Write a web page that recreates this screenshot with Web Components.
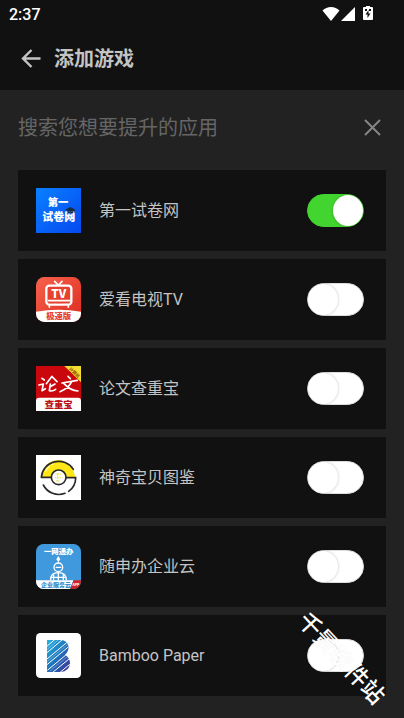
<!DOCTYPE html>
<html lang="zh-CN">
<head>
<meta charset="utf-8">
<meta name="viewport" content="width=device-width, initial-scale=1">
<title>添加游戏</title>
<style>
  body {
    margin: 0;
    background: #222;
    color: #c4c4c4;
    font-family: Roboto, "Noto Sans CJK SC", sans-serif;
    font-size: 16px;
  }
</style>
</head>
<body>
<game-picker></game-picker>

<template id="status-bar">
  <style>
    :host {
      display: flex;
      align-items: center;
      justify-content: space-between;
      height: 28px;
      padding: 0 31px 0 9px;
      background: #111;
      color: #fff;
      font-weight: 500;
    }
    .icons {
      display: flex;
      align-items: center;
      gap: 1px;
    }
    svg { display: block; fill: #fff; }
    .battery { margin-left: 7px; }
  </style>
  <span>2:37</span>
  <div class="icons">
    <svg width="18" height="16" viewBox="0 0 18 16"><path d="M.5 4.500Q4 1 9 1T17.500 4.500L9 15z"/></svg>
    <svg width="14" height="16" viewBox="0 0 14 16"><path d="M14 1v14H0z"/></svg>
    <svg class="battery" width="10" height="16" viewBox="0 0 10 16">
      <path d="M3 0h4v1h2q1 0 1 1v11q0 1-1 1H1q-1 0-1-1V2q0-1 1-1h2z"/>
      <path fill="#111" d="M2 3h2v2H2zM6 3h2v2H6zM5.500 4v3.500H7.500L4.500 12V8.500H2.500z"/>
    </svg>
  </div>
</template>

<template id="title-bar">
  <style>
    :host {
      display: flex;
      align-items: center;
      gap: 10px;
      height: 62px;
      padding: 0 18px;
      background: #111;
    }
    button {
      padding: 0;
      border: 0;
      background: none;
      color: inherit;
      cursor: pointer;
    }
    svg { display: block; }
    h1 {
      margin: 0;
      font-size: 20px;
      line-height: 28px;
      font-weight: 700;
    }
  </style>
  <button type="button" aria-label="返回">
    <svg width="26" height="26" viewBox="0 0 26 26" fill="none" stroke="currentColor" stroke-width="2.400"><path d="M22.500 12.500H6M13.500 4L5 12.500l8.500 8.500"/></svg>
  </button>
  <h1><slot></slot></h1>
</template>

<template id="search-box">
  <style>
    :host {
      display: flex;
      align-items: center;
      height: 76px;
      padding: 0 18px;
    }
    input {
      flex: 1;
      min-width: 0;
      padding: 0;
      border: 0;
      outline: 0;
      background: none;
      color: #c4c4c4;
      font: inherit;
      font-size: 20px;
    }
    input::placeholder { color: #666; opacity: 1; }
    button {
      padding: 4px;
      border: 0;
      background: none;
      color: #858585;
      cursor: pointer;
    }
    svg { display: block; }
  </style>
  <input type="text" aria-label="搜索">
  <button type="button" aria-label="清除">
    <svg width="18" height="18" viewBox="0 0 18 18" fill="none" stroke="currentColor" stroke-width="2"><path d="M1 1l15 15M16 1L1 16"/></svg>
  </button>
</template>

<template id="toggle-row">
  <style>
    :host {
      display: flex;
      align-items: center;
      gap: 18px;
      padding: 18px 22px 18px 18px;
      background: #111;
    }
    ::slotted(svg) {
      display: block;
      flex: none;
      width: 45px;
      height: 45px;
    }
    label {
      flex: 1;
      line-height: 24px;
    }
    input {
      appearance: none;
      position: relative;
      box-sizing: border-box;
      width: 57px;
      height: 33px;
      margin: 0;
      border: 1px solid #ddd;
      border-radius: 17px;
      background: #fff;
      cursor: pointer;
    }
    input::before {
      content: "";
      position: absolute;
      top: 0;
      left: 0;
      width: 30px;
      height: 31px;
      border-radius: 50%;
      background: #fff;
      box-shadow: 0 0 3px rgba(0, 0, 0, .25);
    }
    input:checked {
      border-color: #43d52f;
      background: #43d52f;
    }
    input:checked::before {
      left: auto;
      right: 0;
    }
  </style>
  <slot name="icon"></slot>
  <label for="switch"></label>
  <input id="switch" type="checkbox" role="switch">
</template>

<template id="game-picker">
  <style>
    :host {
      display: flex;
      flex-direction: column;
      box-sizing: border-box;
      position: relative;
      min-height: 100vh;
      border-bottom: 1px solid #151012;
    }
    main {
      display: grid;
      gap: 8px;
      padding: 4px 18px 22px;
    }
    svg text {
      font-family: "Noto Sans CJK SC", sans-serif;
      font-weight: 900;
      text-anchor: middle;
    }
    /* watermark runs diagonally over the bottom right corner */
    .mark {
      position: absolute;
      right: 6px;
      bottom: 43px;
      color: #fff;
      font-size: 23px;
      line-height: 32px;
      font-weight: 500;
      text-shadow: 0 0 1px rgba(0, 0, 0, .1);
      transform: rotate(47deg);
      pointer-events: none;
    }
  </style>
  <status-bar></status-bar>
  <title-bar>添加游戏</title-bar>
  <search-box placeholder="搜索您想要提升的应用"></search-box>
  <main>
    <toggle-row name="第一试卷网" checked>
      <svg slot="icon" viewBox="0 0 135 135">
        <defs><linearGradient id="blue" x2="1" y2="1"><stop stop-color="#0a80ff"/><stop offset="1" stop-color="#0648f0"/></linearGradient></defs>
        <path fill="url(#blue)" d="M0 0h135v135H0z"/>
        <text x="66" y="55" font-size="31" fill="#fff">第一</text>
        <text x="68" y="99" font-size="33" fill="#fff">试卷网</text>
        <path fill="#152c49" d="M87 65l16-8 16 8-16 7zM94 69v5q9 4 18 0v-5l-9 4zM115 65h2v9h-2z"/>
      </svg>
    </toggle-row>
    <toggle-row name="爱看电视TV">
      <svg slot="icon" viewBox="0 0 135 135">
        <defs><clipPath id="tvclip"><rect width="135" height="135" rx="25"/></clipPath>
        <linearGradient id="red" x2="1" y2="1"><stop stop-color="#f7634c"/><stop offset="1" stop-color="#dc2b20"/></linearGradient></defs>
        <g clip-path="url(#tvclip)">
          <path fill="url(#red)" d="M0 0h135v135H0z"/>
          <path fill="#fff" d="M0 104Q67 92 135 104v31H0z"/>
          <path fill="none" stroke="#fff" stroke-width="5" stroke-linecap="round" d="M56 13l11 12 11-12"/>
          <rect x="31" y="26" width="75" height="57" rx="9" fill="#e8402f" stroke="#fff" stroke-width="7"/>
          <path stroke="#fff" stroke-width="5" d="M35 71h67M40 85v7M97 85v7"/>
          <path stroke="#e8402f" stroke-width="3" d="M42 77h12M60 77h20"/>
          <text x="68" y="63" font-size="35" fill="#fff">TV</text>
          <text x="68" y="127" font-size="25" fill="#e7412e">极速版</text>
        </g>
      </svg>
    </toggle-row>
    <toggle-row name="论文查重宝">
      <svg slot="icon" viewBox="0 0 135 135">
        <path fill="#c9070d" d="M0 0h135v135H0z"/>
        <path fill="#fff" d="M0 135v-31q0-9 9-9h117q9 0 9 9v31z"/>
        <path fill="#f4df31" d="M85 0h50v49z"/>
        <text transform="translate(114 21) rotate(44)" y="3" font-size="13" fill="#9c5c10">计算机</text>
        <g fill="none" stroke="#fff" stroke-width="5" stroke-linecap="round" stroke-linejoin="round">
          <path d="M18 37l7 5M9 57l13-3-4 20 10-6M48 31L31 53M48 32l15 15M43 54l-3 20q10 3 19-4M57 54L41 63"/>
          <path d="M96 31l7 7M78 51l46-8M107 47Q98 67 72 77M84 53q19 21 42 22"/>
        </g>
        <text x="68" y="126" font-size="28" fill="#b71219">查重宝</text>
      </svg>
    </toggle-row>
    <toggle-row name="神奇宝贝图鉴">
      <svg slot="icon" viewBox="0 0 135 135">
        <path fill="#fff" d="M0 0h135v135H0z"/>
        <path fill="#ffe617" d="M17 66Q18 40 38 25T83 18L111 42 118 66H91Q86 47 68 46 50 47 45 66z"/>
        <g fill="none" stroke="#292929" stroke-width="5" stroke-linecap="round">
          <path d="M16 67A52 51 0 0 1 112 43M16 67h29M91 68h28A52 51 0 0 1 98 109M87 115A52 51 0 0 1 22 90"/>
          <circle cx="68" cy="67" r="22" fill="#fff"/>
        </g>
        <path fill="none" stroke="#fff6a2" stroke-width="4" stroke-linecap="round" d="M29 48q4-9 11-14M47 29l4-2"/>
        <path fill="none" stroke="#eddb38" stroke-width="3" stroke-dasharray="4 3" d="M58 57h17M57 68h22M60 78h14M65 54v27"/>
      </svg>
    </toggle-row>
    <toggle-row name="随申办企业云">
      <svg slot="icon" viewBox="0 0 135 135">
        <defs><clipPath id="cloudclip"><rect width="135" height="135" rx="23"/></clipPath></defs>
        <g clip-path="url(#cloudclip)">
          <path fill="#4099dc" d="M0 0h135v135H0z"/>
          <text x="68" y="29" font-size="22" fill="#fff">一网通办</text>
          <path fill="#fff" d="M67 36l6 10-6 8-6-8z"/>
          <g fill="none" stroke="#fff" stroke-width="4">
            <circle cx="67" cy="70" r="13"/><path d="M59 70h17M67 53v5M67 84v25M44 109Q43 86 67 86t24 23M53 92v17M82 92v17M47 100h40"/>
          </g>
          <path fill="#fff" d="M0 109h112l-10 26H0z"/>
          <path fill="#cf232b" d="M113 109h22v26h-33z"/>
          <text x="60" y="130" font-size="18" fill="#3c91cf">企业服务云</text>
          <text x="120" y="125" font-size="10" fill="#fff">APP</text>
        </g>
      </svg>
    </toggle-row>
    <toggle-row name="Bamboo Paper">
      <svg slot="icon" viewBox="0 0 135 135">
        <defs><linearGradient id="ink" x2="1" y2="1"><stop stop-color="#25b4e4"/><stop offset=".5" stop-color="#1f73bb"/><stop offset="1" stop-color="#432a93"/></linearGradient>
        <clipPath id="bclip"><path d="M33 20h40q23 3 25 22 0 13-11 23 15 9 15 26-2 24-28 26H33z"/></clipPath></defs>
        <rect width="135" height="135" rx="13" fill="#fff"/>
        <g clip-path="url(#bclip)">
          <path fill="url(#ink)" d="M33 20h70v97H33z"/>
          <path stroke="#fff" stroke-width="3" d="M28 44l36-31M28 63l62-52M28 82l76-63M28 99l76-63M34 112l70-58M49 119l56-46M71 119l35-29"/>
          <path stroke="#fff" stroke-width="1" d="M28 54l48-41M28 90l76-63M41 115l62-51M85 119l20-17"/>
        </g>
      </svg>
    </toggle-row>
  </main>
  <div class="mark">千景软件站</div>
</template>

<script>
function attach(host) {
  const root = host.attachShadow({ mode: "open" });
  const template = document.getElementById(host.localName);
  root.appendChild(template.content.cloneNode(true));
  return root;
}

class StatusBar extends HTMLElement {
  constructor() {
    super();
    attach(this);
  }
}

class TitleBar extends HTMLElement {
  constructor() {
    super();
    attach(this);
  }

  connectedCallback() {
    this.shadowRoot.querySelector("button").addEventListener("click", () => history.back());
  }
}

class SearchBox extends HTMLElement {
  constructor() {
    super();
    attach(this);
  }

  connectedCallback() {
    const input = this.shadowRoot.querySelector("input");
    input.placeholder = this.getAttribute("placeholder");
    input.addEventListener("input", () => this.search(input.value));
    this.shadowRoot.querySelector("button").addEventListener("click", () => {
      input.value = "";
      this.search("");
    });
  }

  search(value) {
    this.dispatchEvent(new CustomEvent("search", { detail: value }));
  }
}

class ToggleRow extends HTMLElement {
  constructor() {
    super();
    attach(this);
  }

  connectedCallback() {
    this.shadowRoot.querySelector("label").textContent = this.getAttribute("name");
    this.shadowRoot.querySelector("input").checked = this.hasAttribute("checked");
  }
}

class GamePicker extends HTMLElement {
  constructor() {
    super();
    attach(this);
  }

  connectedCallback() {
    this.shadowRoot.querySelector("search-box").addEventListener("search", (e) => {
      const text = e.detail.trim().toLowerCase();
      this.shadowRoot.querySelectorAll("toggle-row").forEach((row) => {
        const match = row.getAttribute("name").toLowerCase().includes(text);
        row.style.display = match ? "" : "none";
      });
    });
  }
}

customElements.define("status-bar", StatusBar);
customElements.define("title-bar", TitleBar);
customElements.define("search-box", SearchBox);
customElements.define("toggle-row", ToggleRow);
customElements.define("game-picker", GamePicker);
</script>
</body>
</html>
